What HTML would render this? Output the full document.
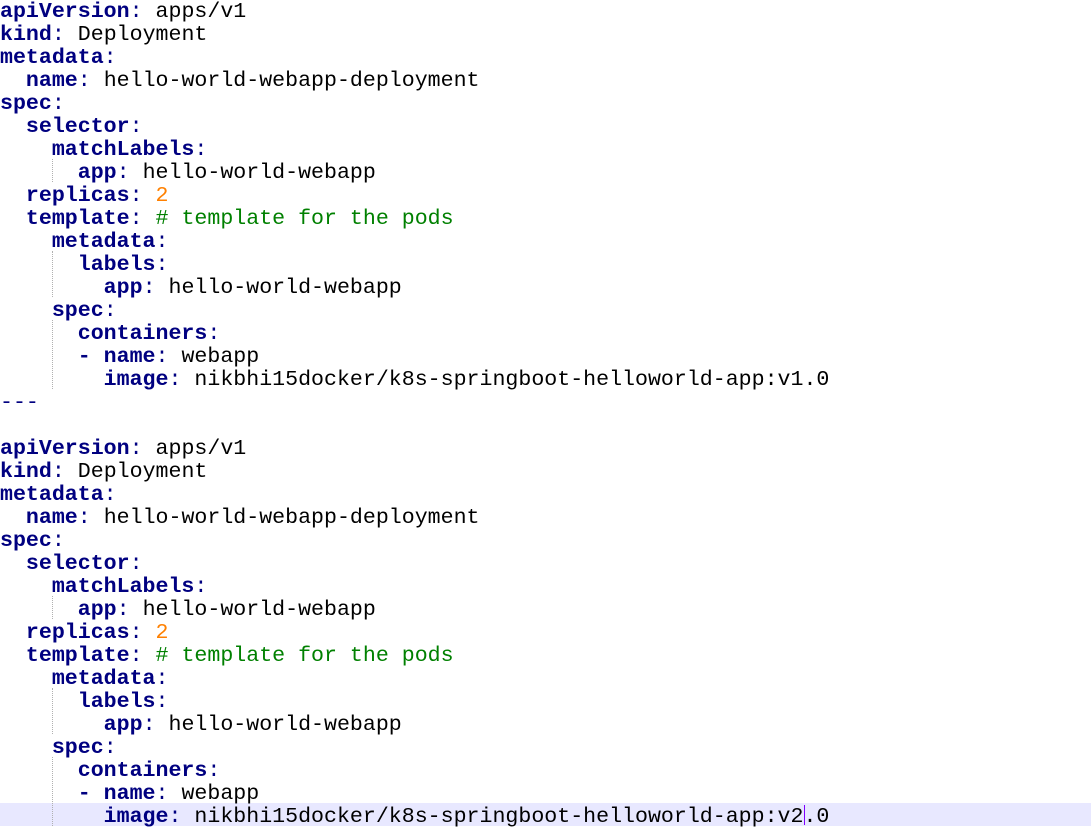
<!DOCTYPE html>
<html><head><meta charset="utf-8"><style>
html,body{margin:0;padding:0;background:#fff;width:1091px;height:829px;overflow:hidden}
#w{position:relative;width:1091px;height:829px}
pre{position:absolute;left:0;top:0.5px;margin:0;font-family:"Liberation Mono","Courier New",monospace;font-size:21.6px;line-height:23px;color:#000;z-index:2}
.k{color:#000080;font-weight:bold}
.p{color:#000080}
.c{color:#008000}
.n{color:#ff8000}
.hl{position:absolute;left:0;width:1091px;top:803px;height:23px;background:#e8e8ff;z-index:1}
.g{position:absolute;width:0;border-left:1px dotted #b0b0b0;z-index:1}
.cur{position:absolute;left:804px;top:805px;width:1px;height:20px;background:#8000ff;z-index:3}
</style></head><body><div id="w">
<div class="hl"></div>
<div class="g" style="left:52px;top:159px;height:23px"></div>
<div class="g" style="left:52px;top:251px;height:46px"></div>
<div class="g" style="left:52px;top:320px;height:69px"></div>
<div class="g" style="left:52px;top:596px;height:23px"></div>
<div class="g" style="left:52px;top:688px;height:46px"></div>
<div class="g" style="left:52px;top:757px;height:69px"></div>
<div class="cur"></div>
<pre><span class="k">apiVersion</span><span class="p">:</span> apps/v1
<span class="k">kind</span><span class="p">:</span> Deployment
<span class="k">metadata</span><span class="p">:</span>
  <span class="k">name</span><span class="p">:</span> hello-world-webapp-deployment
<span class="k">spec</span><span class="p">:</span>
  <span class="k">selector</span><span class="p">:</span>
    <span class="k">matchLabels</span><span class="p">:</span>
      <span class="k">app</span><span class="p">:</span> hello-world-webapp
  <span class="k">replicas</span><span class="p">:</span> <span class="n">2</span>
  <span class="k">template</span><span class="p">:</span> <span class="c"># template for the pods</span>
    <span class="k">metadata</span><span class="p">:</span>
      <span class="k">labels</span><span class="p">:</span>
        <span class="k">app</span><span class="p">:</span> hello-world-webapp
    <span class="k">spec</span><span class="p">:</span>
      <span class="k">containers</span><span class="p">:</span>
      <span class="k">- name</span><span class="p">:</span> webapp
        <span class="k">image</span><span class="p">:</span> nikbhi15docker/k8s-springboot-helloworld-app:v1.0
<span class="p">---</span>

<span class="k">apiVersion</span><span class="p">:</span> apps/v1
<span class="k">kind</span><span class="p">:</span> Deployment
<span class="k">metadata</span><span class="p">:</span>
  <span class="k">name</span><span class="p">:</span> hello-world-webapp-deployment
<span class="k">spec</span><span class="p">:</span>
  <span class="k">selector</span><span class="p">:</span>
    <span class="k">matchLabels</span><span class="p">:</span>
      <span class="k">app</span><span class="p">:</span> hello-world-webapp
  <span class="k">replicas</span><span class="p">:</span> <span class="n">2</span>
  <span class="k">template</span><span class="p">:</span> <span class="c"># template for the pods</span>
    <span class="k">metadata</span><span class="p">:</span>
      <span class="k">labels</span><span class="p">:</span>
        <span class="k">app</span><span class="p">:</span> hello-world-webapp
    <span class="k">spec</span><span class="p">:</span>
      <span class="k">containers</span><span class="p">:</span>
      <span class="k">- name</span><span class="p">:</span> webapp
        <span class="k">image</span><span class="p">:</span> nikbhi15docker/k8s-springboot-helloworld-app:v2.0</pre>
</div></body></html>
